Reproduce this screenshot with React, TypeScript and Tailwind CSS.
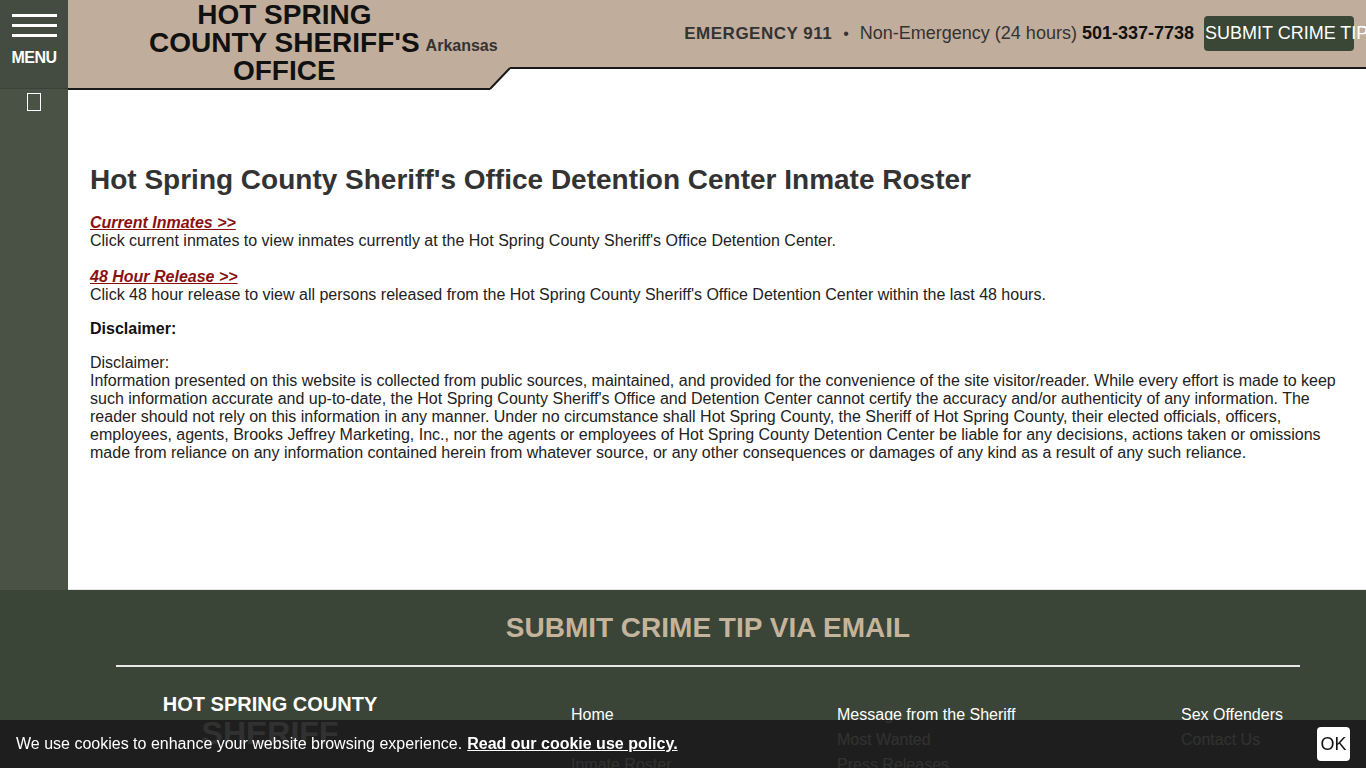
import React from 'react';

const font = { fontFamily: '"Liberation Sans", Arial, sans-serif' };

function Header() {
  return (
    <div className="flex items-start h-[90px]">
      {/* title block */}
      <div className="w-[422px] h-[90px] bg-[#c1ad9b] border-b-2 border-[#1a1a1a] flex items-center pl-[81px]">
        <div className="text-[28px] leading-[28px] font-bold text-[#111] text-center whitespace-nowrap -mt-[2px]">
          HOT SPRING
          <br />
          COUNTY SHERIFF'S
          <br />
          OFFICE
        </div>
        <div className="relative z-10 ml-[6px] text-[16px] font-bold text-[#333] mt-[4px] whitespace-nowrap">Arkansas</div>
      </div>
      {/* diagonal notch */}
      <svg width="20" height="90" viewBox="0 0 20 90" className="shrink-0 block">
        <polygon points="0,0 20,0 20,68 0,89" fill="#c1ad9b" />
        <line x1="0" y1="89" x2="20" y2="68" stroke="#1a1a1a" strokeWidth="2" />
      </svg>
      <div className="flex-1 h-[69px] bg-[#c1ad9b] border-b-2 border-[#1a1a1a] flex items-center justify-end pr-3">
        <span className="text-[17px] font-bold text-[#333] tracking-[0.5px]">EMERGENCY 911</span>
        <span className="mx-[11px] text-[16px] text-[#333]">•</span>
        <span className="text-[18px] text-[#333]">Non-Emergency (24 hours)</span>
        <span className="ml-[5px] text-[18px] font-bold text-[#111]">501-337-7738</span>
        <button className="ml-[10px] w-[150px] h-[35px] bg-[#3a4636] rounded-[4px] text-white text-[18px] text-left pl-[1px] whitespace-nowrap overflow-visible">
          SUBMIT CRIME TIP
        </button>
      </div>
    </div>
  );
}

function Sidebar() {
  return (
    <div className="w-[68px] shrink-0 bg-[#4a5246] flex flex-col items-center">
      <div className="w-[68px] h-[89px] bg-[#444c41] border-b border-[#3a4137] flex flex-col items-center pt-[14px]">
        <div className="w-[45px] h-[3px] bg-white" />
        <div className="w-[45px] h-[3px] bg-white mt-[7px]" />
        <div className="w-[45px] h-[3px] bg-white mt-[7px]" />
        <div className="text-white font-bold text-[16px] leading-[18px] mt-[12px] tracking-[-0.5px]">MENU</div>
      </div>
      <div className="w-[14px] h-[18px] border border-white mt-[4px]" />
    </div>
  );
}

function Content() {
  return (
    <div className="px-[22px] pt-[74px] pb-10 text-[16px] leading-[18px] text-[#222]">
      <h1 className="text-[28px] leading-[32px] font-bold text-[#333]">
        Hot Spring County Sheriff's Office Detention Center Inmate Roster
      </h1>
      <div className="mt-[18px]">
        <a href="#" className="font-bold italic underline text-[#8b1111]">Current Inmates &gt;&gt;</a>
        <div>Click current inmates to view inmates currently at the Hot Spring County Sheriff's Office Detention Center.</div>
      </div>
      <div className="mt-[18px]">
        <a href="#" className="font-bold italic underline text-[#8b1111]">48 Hour Release &gt;&gt;</a>
        <div>Click 48 hour release to view all persons released from the Hot Spring County Sheriff's Office Detention Center within the last 48 hours.</div>
      </div>
      <div className="mt-[16px] font-bold text-[#111]">Disclaimer:</div>
      <div className="mt-[16px]">
        Disclaimer:
        <br />
        Information presented on this website is collected from public sources, maintained, and provided for the convenience of the site visitor/reader. While every effort is made to keep such information accurate and up-to-date, the Hot Spring County Sheriff's Office and Detention Center cannot certify the accuracy and/or authenticity of any information. The reader should not rely on this information in any manner. Under no circumstance shall Hot Spring County, the Sheriff of Hot Spring County, their elected officials, officers, employees, agents, Brooks Jeffrey Marketing, Inc., nor the agents or employees of Hot Spring County Detention Center be liable for any decisions, actions taken or omissions made from reliance on any information contained herein from whatever source, or any other consequences or damages of any kind as a result of any such reliance.
      </div>
    </div>
  );
}

function Footer() {
  return (
    <div className="bg-[#3a4437] pt-[22px] pb-10">
      <div className="ml-[116px] w-[1184px]">
        <h2 className="text-center text-[28px] leading-[32px] font-bold text-[#c4b49c]">
          SUBMIT CRIME TIP VIA EMAIL
        </h2>
        <div className="mt-[21px] h-[2px] bg-[#e8e8e8]" />
        <div className="flex mt-[38px] text-[16px] text-white">
          <div className="w-[308px] text-center font-bold">
            <div className="text-[20px] leading-[24px] -mt-[13px]">HOT SPRING COUNTY</div>
            <div className="text-[32px] leading-[34px]">SHERIFF</div>
          </div>
          <div className="ml-[147px] w-[266px] flex flex-col gap-[6px] leading-[19px]">
            <a href="#">Home</a>
            <span>&nbsp;</span>
            <a href="#">Inmate Roster</a>
          </div>
          <div className="w-[344px] flex flex-col gap-[6px] leading-[19px]">
            <a href="#">Message from the Sheriff</a>
            <a href="#">Most Wanted</a>
            <a href="#">Press Releases</a>
          </div>
          <div className="flex flex-col gap-[6px] leading-[19px]">
            <a href="#">Sex Offenders</a>
            <a href="#">Contact Us</a>
          </div>
        </div>
      </div>
    </div>
  );
}

export default function App() {
  return (
    <div style={font} className="min-h-screen bg-white relative">
      <div className="flex h-[590px]">
        <Sidebar />
        <div className="flex-1 flex flex-col bg-white border-b border-[#e5e5e5]">
          <Header />
          <Content />
        </div>
      </div>
      <Footer />
      <div className="fixed bottom-0 left-0 right-0 h-[48px] bg-[#1b1b1b]/90 flex items-center pl-4 pr-4 text-[16px] text-white">
        <span>We use cookies to enhance your website browsing experience.</span>
        <a href="#" className="ml-[5px] font-bold underline">Read our cookie use policy.</a>
        <button className="ml-auto w-[33px] h-[34px] bg-white rounded-[4px] text-[#111] text-[18px] flex items-center justify-center">
          OK
        </button>
      </div>
    </div>
  );
}
